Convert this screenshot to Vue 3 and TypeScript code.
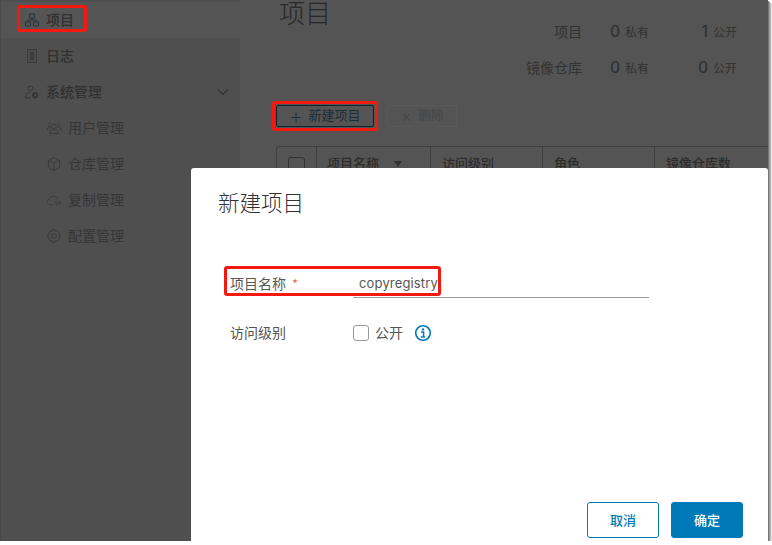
<script setup lang="ts">
interface NavItem { label: string; icon: string; sub?: boolean; active?: boolean; caret?: boolean }
const nav: NavItem[] = [
  { label: '项目', icon: 'tree', active: true },
  { label: '日志', icon: 'log' },
  { label: '系统管理', icon: 'admin', caret: true },
  { label: '用户管理', icon: 'users', sub: true },
  { label: '仓库管理', icon: 'cube', sub: true },
  { label: '复制管理', icon: 'cloud', sub: true },
  { label: '配置管理', icon: 'gear', sub: true },
]
const columns = ['项目名称', '访问级别', '角色', '镜像仓库数']
</script>

<template>
  <div class="frame">
    <div class="app">
      <aside class="side">
        <div v-for="n in nav" :key="n.label" class="item" :class="{ sub: n.sub, active: n.active }">
          <svg class="ico" viewBox="0 0 20 20" fill="none" stroke="currentColor" stroke-width="1">
            <template v-if="n.icon === 'tree'">
              <rect x="7" y="2.5" width="6" height="5" />
              <rect x="2" y="12.5" width="6" height="5" />
              <rect x="12" y="12.5" width="6" height="5" />
              <path d="M10 7.5V10M5 12.5V10H15V12.5" />
            </template>
            <template v-else-if="n.icon === 'log'">
              <rect x="4.5" y="2" width="11" height="16" />
              <path d="M7 5H13M7 7H13M7 9H13M7 11H13M7 13H13M7 15H13" />
            </template>
            <template v-else-if="n.icon === 'admin'">
              <circle cx="8" cy="5.5" r="3" />
              <path d="M2 17.5V14.5C2 12 5 10.8 8 10.8" />
              <path d="M2 17.5H8" />
              <circle cx="14" cy="14" r="2.6" stroke-width="2" />
              <path d="M14 10V11M14 17V18M10 14H11M17 14H18" stroke-width="1.6" />
            </template>
            <template v-else-if="n.icon === 'users'">
              <circle cx="10" cy="8" r="3" />
              <path d="M5 17V14.5C5 13 7 12 10 12S15 13 15 14.5V17Z" />
              <path d="M6 3.5A2.5 2.5 0 0 0 6 8.5M14 3.5A2.5 2.5 0 0 1 14 8.5M1.5 13V11C1.5 10 3 9.5 5 9.5M18.5 13V11C18.5 10 17 9.5 15 9.5" />
            </template>
            <template v-else-if="n.icon === 'cube'">
              <path d="M10 2L17 5.5V14.5L10 18L3 14.5V5.5Z" />
              <path d="M3 5.5L10 9L17 5.5M10 9V18" />
            </template>
            <template v-else-if="n.icon === 'cloud'">
              <path d="M9 16H4.5C2.5 16 1 14.6 1 12.8S2.4 9.6 4.2 9.6C4.8 7 6.8 5 9.5 5C12 5 14 6.6 14.7 9" />
              <path d="M11 13.5H18.5M16 11L18.5 13.5L16 16M12 16H15" />
            </template>
            <template v-else>
              <circle cx="10" cy="10" r="3" />
              <path d="M8.6 2H11.4L12 4.3L14.2 3.4L16.3 5.4L15.4 7.7L17.8 8.5V11.4L15.5 12.2L16.4 14.5L14.4 16.5L12.1 15.6L11.4 18H8.6L7.8 15.6L5.6 16.5L3.6 14.5L4.5 12.2L2.2 11.4V8.5L4.6 7.7L3.7 5.4L5.8 3.4L8 4.3Z" />
            </template>
          </svg>
          <span class="label">{{ n.label }}</span>
          <svg v-if="n.caret" class="caret" viewBox="0 0 12 8" fill="none" stroke="currentColor" stroke-width="1.1">
            <path d="M1 1.5L6 6.5L11 1.5" />
          </svg>
        </div>
      </aside>

      <main class="main">
        <header class="head">
          <h1 class="title">项目</h1>
          <div class="stats">
            <span class="s-label">项目</span>
            <span class="s-val"><b>0</b>私有</span>
            <span class="s-val"><b>1</b>公开</span>
            <span class="s-label">镜像仓库</span>
            <span class="s-val"><b>0</b>私有</span>
            <span class="s-val"><b>0</b>公开</span>
          </div>
        </header>

        <div class="toolbar">
          <button class="tool primary"><span class="sym">＋</span><span class="t">新建项目</span></button>
          <button class="tool disabled"><span class="sym">✕</span><span class="t">删除</span></button>
        </div>

        <div class="table">
          <div class="cell check"><span class="box"></span></div>
          <div v-for="(c, i) in columns" :key="c" class="cell">
            {{ c }}
            <span v-if="i === 0" class="tri"></span>
          </div>
        </div>
      </main>
    </div>

    <div class="overlay"></div>

    <section class="modal">
      <h2 class="m-title">新建项目</h2>
      <div class="form">
        <div class="row first">
          <label class="f-label">项目名称<span class="star">*</span></label>
          <div class="input">copyregistry</div>
        </div>
        <div class="row">
          <label class="f-label">访问级别</label>
          <div class="opts">
            <span class="cb"></span>
            <span class="cb-label">公开</span>
            <svg class="info" viewBox="0 0 18 18" fill="none">
              <circle cx="9" cy="9" r="7.3" stroke="#0079b8" stroke-width="1.6" />
              <circle cx="9" cy="5.4" r="1.2" fill="#0079b8" />
              <path d="M7 8H9.6V12.6M6.8 13H11.2" stroke="#0079b8" stroke-width="1.5" />
            </svg>
          </div>
        </div>
      </div>
      <footer class="foot">
        <button class="btn outline">取消</button>
        <button class="btn solid">确定</button>
      </footer>
    </section>

    <div class="mark mark-nav"></div>
    <div class="mark mark-btn"></div>
    <div class="mark mark-form"></div>
  </div>
</template>

<style>
html, body { margin: 0; background: #fff; }
</style>

<style scoped>
.frame {
  position: relative;
  width: 768px;
  height: 541px;
  box-shadow: 1px 1px 0 #777, 2px 2px 0 #999, 3px 3px 0 #bbb, 4px 4px 0 #e4e4e4;
  font-family: "Noto Sans CJK SC", "Noto Sans", sans-serif;
}
.app {
  display: flex;
  height: 541px;
  overflow: hidden;
  background: #f0f0f0;
}
.side {
  width: 240px;
  flex: none;
  box-sizing: border-box;
  padding-top: 2px;
  background: #e2e2e2;
  border-left: 1px solid #c8d4dc;
}
.item {
  display: flex;
  align-items: center;
  height: 36px;
  padding-left: 23px;
  color: #8c8c8c;
  font-size: 14px;
  font-weight: 500;
}
.item.active { background: #f2f2f2; color: #8c8c8c; }
.item.active .ico { color: #578099; }
.item.sub { padding-left: 45px; font-weight: 400; font-size: 14px; color: #9a9a9a; }
.label { padding-bottom: 2px; }
.ico { width: 16px; height: 16px; flex: none; margin-right: 6px; color: #8c8c8c; }
.sub .ico { margin-right: 6px; color: #9a9a9a; }
.caret { width: 12px; height: 8px; margin-left: auto; margin-right: 11px; color: #8c8c8c; }
.main {
  flex: 1;
  min-width: 0;
  padding-left: 36px;
}
.head { display: flex; justify-content: space-between; height: 86px; }
.title {
  margin: 0 0 0 3px;
  font-size: 26px;
  font-weight: 300;
  line-height: 23px;
  color: #727272;
}
.stats {
  display: grid;
  grid-template-columns: auto 67px 88px;
  grid-auto-rows: 36px;
  margin-top: 13px;
  margin-right: 31px;
  align-items: center;
  justify-items: end;
  color: #909090;
  font-size: 14px;
}
.s-val { font-size: 12px; display: flex; align-items: center; }
.s-val b { font-family: Inter, sans-serif; font-weight: 400; font-size: 16px; margin-right: 5px; color: #808080; }
.toolbar { display: flex; gap: 13px; margin-top: 19px; }
.tool {
  height: 22px;
  padding: 0;
  box-sizing: border-box;
  display: flex;
  align-items: center;
  justify-content: center;
  background: transparent;
  border: 1px solid #777;
  border-radius: 2px;
  font: inherit;
  font-size: 13px;
}
.tool .t { padding-bottom: 4px; }
.primary { width: 98px; color: #4f86a8; border-color: #2c688d; }
.disabled { width: 70px; color: #c8c8c8; border-color: #fff; font-size: 12.5px; padding-left: 1px; }
.sym { margin-right: 6px; font-size: 13px; }
.table {
  display: flex;
  margin-top: 19px;
  height: 60px;
  border: 1px solid #b8b8b8;
  border-radius: 3px 0 0 0;
  border-right: 0;
  color: #808080;
  font-size: 13px;
  font-weight: 500;
}
.cell {
  position: relative;
  width: 112px;
  flex: none;
  box-sizing: border-box;
  padding: 6px 0 0 11px;
  border-left: 1px solid #b2b2b2;
}
.cell.check { width: 39px; border-left: 0; padding: 10px 0 0 11px; }
.cell:nth-child(2) { width: 114px; padding-left: 10px; }
.box { display: block; width: 15px; height: 15px; border: 1px solid #909090; border-radius: 3px; }
.tri {
  position: absolute;
  left: 77px;
  top: 14px;
  width: 0;
  height: 0;
  border-left: 4px solid transparent;
  border-right: 4px solid transparent;
  border-top: 6px solid #909090;
}
.overlay { position: absolute; inset: 0; background: rgba(0, 0, 0, 0.65); }
.modal {
  position: absolute;
  left: 191px;
  top: 168px;
  width: 577px;
  height: 373px;
  box-sizing: border-box;
  padding: 0 25px 3px 27px;
  background: #fff;
  border-radius: 3px 3px 0 0;
  display: flex;
  flex-direction: column;
  color: #565656;
}
.m-title {
  margin: 19px 0 0;
  font-size: 21.5px;
  line-height: 30px;
  font-weight: 300;
  color: #333;
}
.form { margin: 0 0 0 12px; flex: 1; padding-top: 52px; }
.row { display: flex; align-items: center; height: 30px; margin-bottom: 19px; }
.f-label { width: 123px; flex: none; font-size: 14px; padding-bottom: 3px; }
.star { color: #e2725b; margin-left: 6px; font-size: 13px; }
.input {
  width: 296px;
  height: 30px;
  box-sizing: border-box;
  padding: 6px 0 0 6px;
  line-height: 18px;
  border-bottom: 1px solid #9a9a9a;
  font-family: Inter, sans-serif;
  font-size: 13px;
  letter-spacing: 0.15px;
  margin-top: -3px;
}
.opts { display: flex; align-items: center; padding-bottom: 1px; }
.cb { width: 16px; height: 16px; box-sizing: border-box; border: 1px solid #9a9a9a; border-radius: 3px; background: #fff; }
.cb-label { margin-left: 6px; font-size: 14px; padding-bottom: 2px; }
.info { width: 18px; height: 18px; margin-left: 11px; margin-top: 1px; }
.foot { display: flex; justify-content: flex-end; gap: 12px; }
.btn {
  width: 72px;
  height: 36px;
  box-sizing: border-box;
  border-radius: 3px;
  font: inherit;
  font-size: 13px;
  font-weight: 500;
  border: 1px solid #0079b8;
  padding: 0 0 2px;
}
.outline { background: #fff; color: #0079b8; }
.solid { background: #0079b8; color: #fff; }
.mark {
  position: absolute;
  box-sizing: border-box;
  border: 3px solid #f5180f;
  border-radius: 3px;
}
.mark-nav { left: 17px; top: 5px; width: 70px; height: 27px; }
.mark-btn { left: 272px; top: 101px; width: 106px; height: 30px; }
.mark-form { left: 224px; top: 266px; width: 217px; height: 30px; }
</style>
